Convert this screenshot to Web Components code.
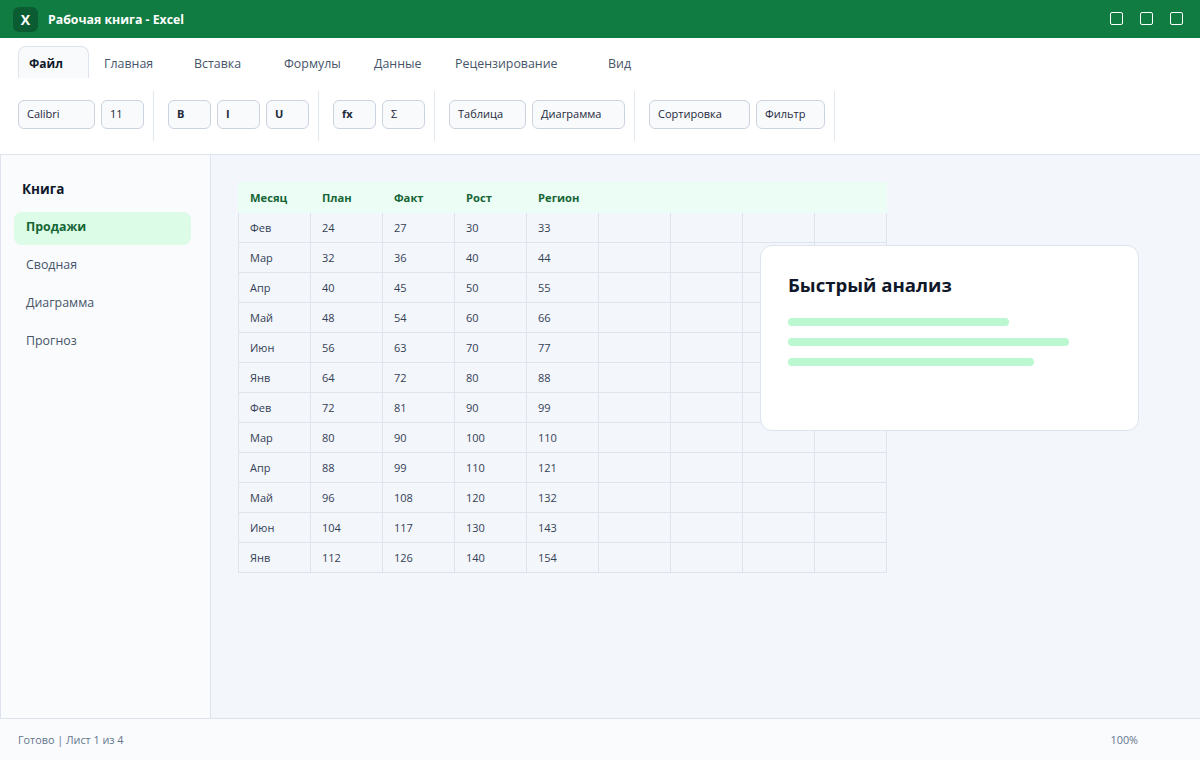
<!DOCTYPE html>
<html lang="ru"><head><meta charset="utf-8"><title>Excel</title>
<style>
html,body{margin:0;height:100%}
body{font-family:"Open Sans","Noto Sans",sans-serif;color:#0f172a;background:#f3f6fb;overflow:hidden}
</style></head><body>
<xl-app></xl-app>
<script>
function def(name, html, init){
  customElements.define(name, class extends HTMLElement{
    constructor(){super();this.attachShadow({mode:'open'}).innerHTML=html;}
    connectedCallback(){ if(init) init.call(this,this.shadowRoot); }
  });
}
def('xl-titlebar',`<style>
:host{display:flex;align-items:center;height:38px;background:#107c41;color:#fff;padding:0 17px 0 13px;box-sizing:border-box}
.logo{width:25px;height:25px;border-radius:6px;background:#0b5c33;display:flex;align-items:center;justify-content:center;font-weight:700;font-size:14px;margin-right:10px}
.t{font-size:12.3px;font-weight:700;flex:1}
.w{display:flex;gap:17px;margin-top:-1px}
.w i{display:block;width:13px;height:13px;box-sizing:border-box;border:1.5px solid #fff;border-radius:2px}
</style><div class="logo">X</div><div class="t">Рабочая книга - Excel</div><div class="w"><i></i><i></i><i></i></div>`);
def('xl-tab',`<style>
:host{display:block;box-sizing:border-box;height:32px;padding:0 11px;font-size:12.4px;line-height:36px;color:#475569;white-space:nowrap;border-radius:8px 8px 0 0}
:host([active]){background:#f8fafc;border:1px solid #dde4ee;border-bottom:0;padding:0 10px;font-size:12px;line-height:33px;color:#0f172a;font-weight:700}
</style><slot></slot>`,function(){this.style.width=this.getAttribute('w')+'px'});
def('xl-btn',`<style>
:host{display:block;box-sizing:border-box;height:29px;border:1px solid #cbd3e0;border-radius:6px;background:#f8fafc;padding:0 8px;font-size:11px;line-height:26px;color:#1e293b;white-space:nowrap}
:host([b]){font-weight:700}
</style><slot></slot>`,function(){this.style.width=this.getAttribute('w')+'px'});
def('xl-group',`<style>
:host{display:flex;gap:6px;align-items:flex-start;box-sizing:border-box;height:50px;padding:9px 9px 0 0;margin-right:14px;border-right:1px solid #e2e8f0}
</style><slot></slot>`);
def('xl-ribbon',`<style>
:host{display:block;box-sizing:border-box;height:117px;background:#fff;border-bottom:1px solid #dde4ee;padding:8px 18px 0}
.tabs{display:flex;gap:4px;height:32px}
.groups{display:flex;margin-top:13px}
</style>
<div class="tabs"><slot name="tab"></slot></div><div class="groups"><slot></slot></div>`);
def('xl-nav',`<style>
:host{display:block;box-sizing:border-box;height:33px;margin-bottom:5px;padding:0 12px;border-radius:8px;font-size:12.4px;line-height:29px;color:#475569}
:host([active]){background:#dcfce7;color:#166534;font-weight:700}
</style><slot></slot>`);
def('xl-sidebar',`<style>
:host{display:block;box-sizing:border-box;width:211px;background:#f9fbfd;border-left:1px solid #dde4ee;border-right:1px solid #dde4ee;padding:24px 19px 0 13px}
h2{margin:0 0 12px 8px;font-size:13.5px;line-height:21px;font-weight:700;color:#0f172a}
</style><h2>Книга</h2><slot></slot>`);
def('xl-sheet',`<style>
:host{display:grid;grid-template-columns:73px repeat(8,72px);grid-template-rows:31px;grid-auto-rows:30px;width:649px;font-size:11px;color:#334155}
.h{background:#ecfdf5;color:#166534;font-weight:700;font-size:11.2px;padding-left:11px;line-height:31px;box-sizing:border-box}
.h.f{padding-left:12px}
.c{box-sizing:border-box;border-right:1px solid #dde4ee;border-bottom:1px solid #dde4ee;padding-left:11px;line-height:29px}
.c.f{border-left:1px solid #dde4ee;padding-left:11px}
</style><div id="g" style="display:contents"></div>`,function(s){
  if(this._d)return;this._d=1;
  const head=['Месяц','План','Факт','Рост','Регион','','','',''];
  const m=['Фев','Мар','Апр','Май','Июн','Янв','Фев','Мар','Апр','Май','Июн','Янв'];
  let h='';
  head.forEach((t,j)=>h+=`<div class="h${j==0?' f':''}">${t}</div>`);
  m.forEach((n,i)=>{
    const k=i+3;
    [n,k*8,k*9,k*10,k*11,'','','',''].forEach((v,j)=>{
      h+=`<div class="c${j==0?' f':''}">${v}</div>`;
    });
  });
  s.getElementById('g').innerHTML=h;
});
def('xl-card',`<style>
:host{position:absolute;left:549px;top:90px;width:379px;height:186px;box-sizing:border-box;background:#fff;border:1px solid #dde4ee;border-radius:12px;padding:24px 27px}
h3{margin:0 0 18px;font-size:18.6px;line-height:30px;font-weight:700;color:#0f172a}
.b{height:8px;border-radius:4px;background:#bbf7d0;margin-bottom:12px}
</style><h3>Быстрый анализ</h3><div class="b" style="width:221px"></div><div class="b" style="width:281px"></div><div class="b" style="width:246px"></div>`);
def('xl-status',`<style>
:host{display:flex;justify-content:space-between;align-items:center;box-sizing:border-box;height:42px;background:#f9fbfd;border-top:1px solid #dde4ee;padding:0 62px 0 18px;font-size:10.8px;line-height:38px;color:#64748b}
</style><span>Готово | Лист 1 из 4</span><span>100%</span>`);
def('xl-app',`<style>
:host{display:flex;flex-direction:column;width:1200px;height:760px}
.main{flex:1;display:flex;min-height:0}
.work{flex:1;position:relative;padding:27px 0 0 27px}
</style>
<xl-titlebar></xl-titlebar>
<xl-ribbon>
<xl-tab slot="tab" active w="71">Файл</xl-tab><xl-tab slot="tab" w="86">Главная</xl-tab><xl-tab slot="tab" w="86">Вставка</xl-tab><xl-tab slot="tab" w="86">Формулы</xl-tab><xl-tab slot="tab" w="77">Данные</xl-tab><xl-tab slot="tab" w="149">Рецензирование</xl-tab><xl-tab slot="tab" w="60">Вид</xl-tab>
<xl-group><xl-btn w="77">Calibri</xl-btn><xl-btn w="43">11</xl-btn></xl-group>
<xl-group><xl-btn b w="43">B</xl-btn><xl-btn b w="43">I</xl-btn><xl-btn b w="43">U</xl-btn></xl-group>
<xl-group><xl-btn b w="43">fx</xl-btn><xl-btn w="43">Σ</xl-btn></xl-group>
<xl-group><xl-btn w="77">Таблица</xl-btn><xl-btn w="93">Диаграмма</xl-btn></xl-group>
<xl-group><xl-btn w="101">Сортировка</xl-btn><xl-btn w="69">Фильтр</xl-btn></xl-group>
</xl-ribbon>
<div class="main">
<xl-sidebar><xl-nav active>Продажи</xl-nav><xl-nav>Сводная</xl-nav><xl-nav>Диаграмма</xl-nav><xl-nav>Прогноз</xl-nav></xl-sidebar>
<div class="work"><xl-sheet></xl-sheet><xl-card></xl-card></div>
</div>
<xl-status></xl-status>`);
</script>
</body></html>
